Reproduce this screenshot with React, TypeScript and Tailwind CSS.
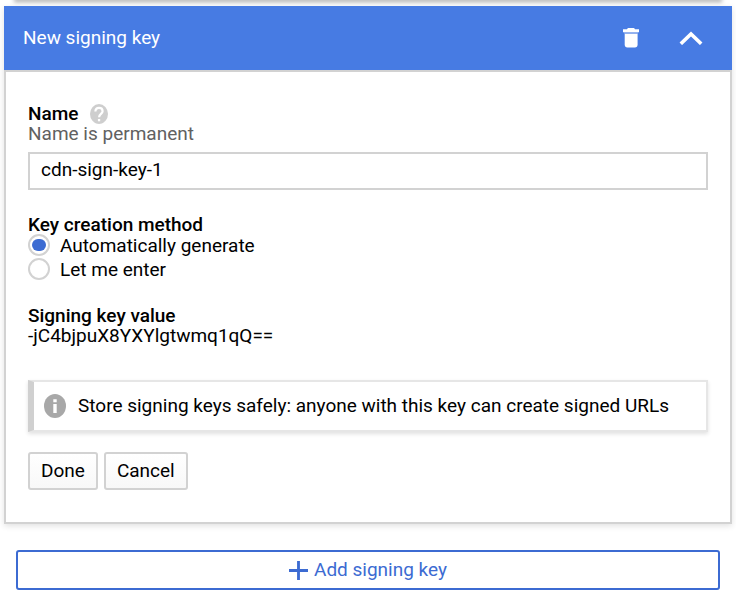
import { useState } from "react";

const METHODS = [
  { value: "auto", label: "Automatically generate" },
  { value: "manual", label: "Let me enter" },
];

function TrashIcon() {
  return (
    <svg viewBox="0 0 16 20" className="h-5 w-4 fill-white" aria-hidden="true">
      <path d="M0 1.200h4C4.300.3 5 0 5.800 0h4.400c.8 0 1.500.3 1.800 1.200h4v3H0z" />
      <path d="M1 4.200h14v1.500H1z" opacity="0.3" />
      <path d="M1.700 5.700h12.900v10.800c0 1.900-1 2.900-2.700 2.900H4.400c-1.700 0-2.700-1-2.700-2.900z" />
    </svg>
  );
}

function ChevronUpIcon() {
  return (
    <svg viewBox="0 0 24 14" className="h-3.5 w-6 fill-none stroke-white" aria-hidden="true">
      <path d="M1.800 12.800 12 2.900 22.200 12.800" strokeWidth="3.600" />
    </svg>
  );
}

function HelpIcon() {
  return (
    <svg viewBox="0 0 18 20" className="h-5 w-[18px]" aria-hidden="true">
      <ellipse cx="9" cy="10" rx="9" ry="10" fill="#cecece" />
      <path
        d="M5.400 7.500C5.400 5.200 6.800 3.900 9 3.900s3.600 1.300 3.600 3.300c0 2.600-3.500 2.900-3.500 6"
        fill="none"
        stroke="#fff"
        strokeWidth="2.200"
      />
      <path d="M7.900 15h2.300v2.300H7.900z" fill="#fff" />
    </svg>
  );
}

function InfoIcon() {
  return (
    <svg viewBox="0 0 22 24" className="h-6 w-[22px] shrink-0" aria-hidden="true">
      <ellipse cx="11" cy="12" rx="11" ry="12" fill="#a8a8a8" />
      <path d="M9.300 5.300h3.400v3H9.300zM9.300 10h3.400v9H9.300z" fill="#fff" />
    </svg>
  );
}

function PlusIcon() {
  return (
    <svg viewBox="0 0 20 20" className="size-[19px] fill-[#3c6bd2]" aria-hidden="true">
      <path d="M8.500 0h3v8.500H20v3h-8.500V20h-3v-8.500H0v-3h8.500z" />
    </svg>
  );
}

export default function App() {
  const [name, setName] = useState("cdn-sign-key-1");
  const [method, setMethod] = useState("auto");
  const secondary =
    "h-[38px] rounded-[3px] border-2 border-[#d2d2d2] bg-linear-to-b from-white to-[#f8f8f8] px-[11px]";

  return (
    <main className="overflow-hidden bg-white px-1 pb-2 font-['Roboto',sans-serif] text-[19px] leading-5 text-black">
      <div className="mx-3 mb-1.5 h-0 shadow-[0_0_4px_2px_rgba(0,0,0,0.35)]" />
      <section className="shadow-[0_2px_6px_rgba(0,0,0,0.12)]">
        <header className="relative flex h-16 items-center bg-[#477be3] pr-[29px] pl-[19px] text-white">
          <h2 className="flex-1">New signing key</h2>
          <button type="button" aria-label="Delete signing key" className="mr-10">
            <TrashIcon />
          </button>
          <button type="button" aria-label="Collapse">
            <ChevronUpIcon />
          </button>
        </header>
        <form
          className="relative border-2 border-[#d2d2d2] bg-white px-[22px] pt-8 pb-8"
          onSubmit={(e) => e.preventDefault()}
        >
          <div className="flex items-center gap-3">
            <label htmlFor="key-name" className="font-medium">
              Name
            </label>
            <button type="button" aria-label="Help">
              <HelpIcon />
            </button>
          </div>
          <p className="text-[#616161]">Name is permanent</p>
          <input
            id="key-name"
            value={name}
            onChange={(e) => setName(e.target.value)}
            className="mt-2 block h-[38px] w-full border-2 border-[#d2d2d2] bg-white px-[11px] pb-1 outline-none"
          />

          <fieldset className="mt-[26px]">
            <legend className="font-medium leading-[18px]">Key creation method</legend>
            {METHODS.map((m) => (
              <label key={m.value} className="flex h-6 items-center gap-2.5">
                <input
                  type="radio"
                  name="method"
                  value={m.value}
                  checked={method === m.value}
                  onChange={() => setMethod(m.value)}
                  className="size-[22px] appearance-none self-start rounded-full border-2 border-[#d2d2d2] bg-white px-0.5 py-[3px] before:block before:h-3 before:w-3.5 before:rounded-full checked:before:bg-[#3c6bd2]"
                />
                {m.label}
              </label>
            ))}
          </fieldset>

          <h3 className="mt-6 font-medium">Signing key value</h3>
          <p>-jC4bjpuX8YXYlgtwmq1qQ==</p>

          <div className="mt-[34px] flex h-[52px] items-center border-2 border-l-[6px] border-[#e6e6e6] border-l-[#d0d0d0] pl-2.5 shadow-[0_2px_4px_rgba(0,0,0,0.12)]">
            <InfoIcon />
            <p className="ml-3">
              Store signing keys safely: anyone with this key can create signed URLs
            </p>
          </div>

          <div className="mt-5 flex gap-1.5">
            <button type="submit" className={secondary}>
              Done
            </button>
            <button type="button" className={secondary}>
              Cancel
            </button>
          </div>
        </form>
      </section>

      <button
        type="button"
        className="mx-3 mt-[26px] flex h-10 w-[calc(100%-24px)] items-center justify-center gap-1.5 rounded-[3px] border-2 border-[#3c6bd2] bg-white text-[#3c6bd2]"
      >
        <PlusIcon />
        Add signing key
      </button>
    </main>
  );
}
